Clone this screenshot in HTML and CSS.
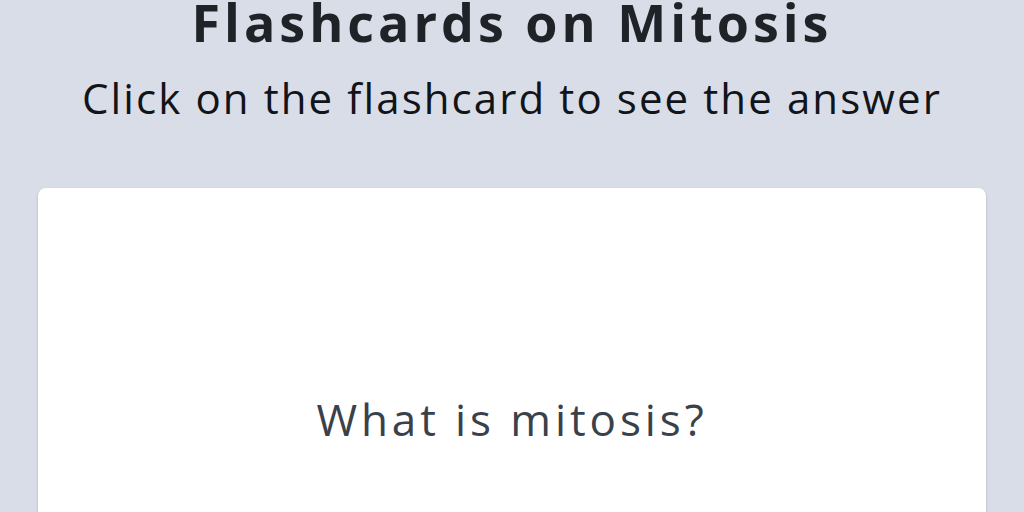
FILE: index.html
```html
<!DOCTYPE html>
<html lang="en">
<head>
<meta charset="utf-8">
<title>Flashcards on Mitosis</title>
<link rel="stylesheet" href="styles.css">
</head>
<body>
<main class="page">
  <header class="intro">
    <h1 class="title">Flashcards on Mitosis</h1>
    <p class="subtitle">Click on the flashcard to see the answer</p>
  </header>
  <section class="card">
    <p class="question">What is mitosis?</p>
  </section>
</main>
</body>
</html>
```
FILE: styles.css
```css
html, body {
  margin: 0;
  padding: 0;
  background: #d9dde8;
}
body {
  font-family: "Open Sans", "Noto Sans", sans-serif;
  color: #1f2328;
  overflow: hidden;
}
.page {
  display: flex;
  flex-direction: column;
  align-items: center;
  padding: 0 38px;
}
.intro {
  display: flex;
  flex-direction: column;
  align-items: center;
}
.title {
  margin: 2px 0 0;
  font-size: 52px;
  line-height: 40px;
  font-weight: 700;
  letter-spacing: 4px;
  color: #1f2328;
}
.subtitle {
  margin: 30px 0 0;
  font-size: 42px;
  line-height: 52px;
  font-weight: 400;
  letter-spacing: 2.1px;
  color: #111418;
}
.card {
  margin-top: 64px;
  width: 100%;
  height: 462px;
  background: #ffffff;
  border-radius: 8px;
  box-shadow: 0 1px 3px rgba(0,0,0,0.12), 0 1px 2px rgba(0,0,0,0.08);
  display: flex;
  align-items: center;
  justify-content: center;
}
.question {
  margin: 0;
  font-size: 44px;
  line-height: 52px;
  letter-spacing: 3.9px;
  color: #3a414b;
}
```
